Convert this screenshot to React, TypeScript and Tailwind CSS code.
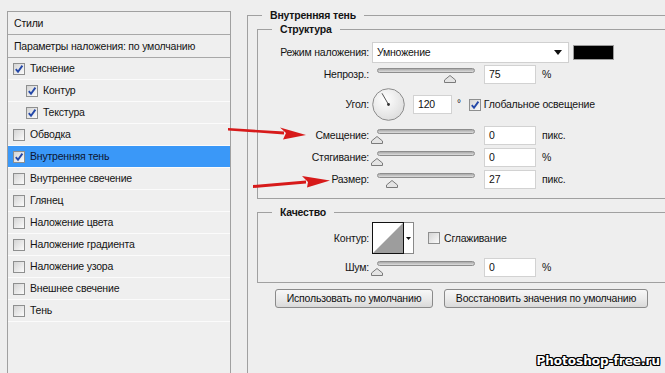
import React from 'react';

const STYLES: Array<{ label: string; checked?: boolean; sub?: boolean; selected?: boolean }> = [
  { label: 'Тиснение', checked: true },
  { label: 'Контур', checked: true, sub: true },
  { label: 'Текстура', checked: true, sub: true },
  { label: 'Обводка' },
  { label: 'Внутренняя тень', checked: true, selected: true },
  { label: 'Внутреннее свечение' },
  { label: 'Глянец' },
  { label: 'Наложение цвета' },
  { label: 'Наложение градиента' },
  { label: 'Наложение узора' },
  { label: 'Внешнее свечение' },
  { label: 'Тень' },
];

function Checkbox({ checked }: { checked?: boolean }) {
  return (
    <span className="relative w-[12px] h-[12px] shrink-0 border border-[#8e8f8f] bg-gradient-to-br from-[#d4d4d4] to-[#fbfbfb] flex items-center justify-center">
      {checked && (
        <svg width="10" height="10" viewBox="0 0 10 10">
          <path d="M1.8 5.2 L4 7.8 L8.4 1.6" fill="none" stroke="#2448a8" strokeWidth="1.9" />
        </svg>
      )}
    </span>
  );
}

// horizontal slider, thumb overlaps the bottom of the track
function Slider({ pos }: { pos: number }) {
  return (
    <div className="relative w-[98px] h-[16px] shrink-0">
      <div className="mt-[4px] h-[5px] rounded-full border border-[#8d8d8d] bg-gradient-to-b from-[#a9a9a9] to-[#dedede]" />
      <svg className="absolute top-[7px]" style={{ left: pos - 6 }} width="12" height="8" viewBox="0 0 12 8">
        <path d="M0.5 7.5 L0.5 5 L6 0.5 L11.5 5 L11.5 7.5 Z" fill="#e4e4e4" stroke="#7a7a7a" strokeWidth="1" />
      </svg>
    </div>
  );
}

function NumField({ value, w = 'w-[52px]' }: { value: string; w?: string }) {
  return (
    <div className={`${w} h-[19px] shrink-0 bg-white border border-[#d2d2d2] flex items-center pl-[4px] text-[#111]`}>
      {value}
    </div>
  );
}

function Label({ children }: { children: React.ReactNode }) {
  return <span className="w-[111px] shrink-0 text-right">{children}</span>;
}

function SliderRow({ label, value, unit, pos }: { label: string; value: string; unit: string; pos: number }) {
  return (
    <div className="flex items-center h-[22px]">
      <Label>{label}</Label>
      <div className="ml-[8px]">
        <Slider pos={pos} />
      </div>
      <div className="ml-[9px]">
        <NumField value={value} />
      </div>
      <span className="ml-[6px]">{unit}</span>
    </div>
  );
}

function Button({ children, w }: { children: React.ReactNode; w: string }) {
  return (
    <button className={`${w} h-[19px] rounded-[3px] border border-[#8a8a8a] bg-gradient-to-b from-[#f7f7f7] via-[#ebebeb] to-[#d9d9d9] leading-none text-[#111]`}>
      {children}
    </button>
  );
}

export default function App() {
  return (
    <div className="relative flex w-[665px] h-[373px] overflow-hidden bg-[#eeeeee] text-[10.5px] tracking-[-0.2px] leading-[13px] text-[#141414] font-['Liberation_Sans',Arial,sans-serif]">
      {/* ── Styles list ── */}
      <aside className="ml-[7px] mt-[11px] w-[224px] h-[380px] shrink-0 border border-[#a0a0a0] bg-[#efefef]">
        <div className="h-[23px] flex items-center pl-[6px] border-b border-[#a8a8a8]">Стили</div>
        <div className="h-[23px] flex items-center pl-[6px] border-b border-[#a8a8a8]">Параметры наложения: по умолчанию</div>
        {STYLES.map((s) => (
          <div
            key={s.label}
            className={`h-[22px] flex items-center gap-[5px] border-b border-[#fbfbfb] ${s.sub ? 'pl-[18px]' : 'pl-[5px]'} ${s.selected ? 'bg-[#3a98f8] text-[#0d1530]' : ''}`}
          >
            <Checkbox checked={s.checked} />
            <span>{s.label}</span>
          </div>
        ))}
      </aside>

      {/* ── Inner shadow settings ── */}
      <fieldset className="ml-[16px] mt-[9px] flex-1 border-l border-t border-[#a0a0a0] min-w-0">
        <legend className="ml-[14px] px-[8px] font-bold leading-[13px]">Внутренняя тень</legend>

        <fieldset className="ml-[9px] mt-[1px] border-l border-t border-b border-[#a0a0a0] pt-[5px] pb-[8px]">
          <legend className="ml-[14px] px-[8px] font-bold leading-[13px]">Структура</legend>

          <div className="flex items-center h-[22px]">
            <Label>Режим наложения:</Label>
            <div className="ml-[3px] w-[197px] h-[21px] bg-white border border-[#d0d0d0] flex items-center justify-between pl-[4px] pr-[6px]">
              <span>Умножение</span>
              <svg width="8" height="5" viewBox="0 0 8 5">
                <path d="M0 0 H8 L4 5 Z" fill="#111" />
              </svg>
            </div>
            <div className="ml-[4px] w-[41px] h-[15px] bg-black border border-[#9a9a9a]" />
          </div>

          <SliderRow label="Непрозр.:" value="75" unit="%" pos={73} />

          <div className="flex items-center h-[39px]">
            <Label>Угол:</Label>
            <svg className="ml-[3px] shrink-0" width="33" height="33" viewBox="0 0 33 33">
              <defs>
                <radialGradient id="dial" cx="40%" cy="35%" r="70%">
                  <stop offset="0%" stopColor="#ffffff" />
                  <stop offset="100%" stopColor="#dcdcdc" />
                </radialGradient>
              </defs>
              <circle cx="16.5" cy="16.5" r="15.8" fill="url(#dial)" stroke="#8c8c8c" strokeWidth="1" />
              <line x1="16.5" y1="16.5" x2="10" y2="5.3" stroke="#555" strokeWidth="1" />
              <circle cx="16.5" cy="16.5" r="1.4" fill="#333" />
            </svg>
            <div className="ml-[8px]">
              <NumField value="120" w="w-[39px]" />
            </div>
            <span className="ml-[5px] self-start mt-[12px] text-[10px]">°</span>
            <div className="ml-[8px] flex items-center gap-[3px]">
              <Checkbox checked />
              <span>Глобальное освещение</span>
            </div>
          </div>

          <SliderRow label="Смещение:" value="0" unit="пикс." pos={0} />
          <SliderRow label="Стягивание:" value="0" unit="%" pos={0} />
          <SliderRow label="Размер:" value="27" unit="пикс." pos={15} />
        </fieldset>

        <fieldset className="ml-[9px] mt-[7px] border-l border-t border-b border-[#a0a0a0] pt-[3px] pb-[4px]">
          <legend className="ml-[14px] px-[8px] font-bold leading-[13px]">Качество</legend>

          <div className="flex items-center h-[32px]">
            <Label>Контур:</Label>
            <div className="ml-[3px] flex h-[32px] shrink-0">
              <svg width="32" height="32" viewBox="0 0 32 32">
                <rect x="0" y="0" width="32" height="32" fill="#ffffff" />
                <path d="M1 31 L31 1 L31 31 Z" fill="#9d9d9d" />
                <rect x="0.5" y="0.5" width="31" height="31" fill="none" stroke="#111" strokeWidth="1" />
              </svg>
              <div className="w-[10px] h-[32px] bg-white border-t border-r border-b border-[#8a8a8a] flex items-center justify-center">
                <svg width="5" height="3" viewBox="0 0 5 3">
                  <path d="M0 0 H5 L2.5 3 Z" fill="#111" />
                </svg>
              </div>
            </div>
            <div className="ml-[14px] flex items-center gap-[4px]">
              <Checkbox />
              <span>Сглаживание</span>
            </div>
          </div>

          <div className="mt-[2px]">
            <SliderRow label="Шум:" value="0" unit="%" pos={0} />
          </div>
        </fieldset>

        <div className="mt-[6px] ml-[27px] flex gap-[11px]">
          <Button w="w-[158px]">Использовать по умолчанию</Button>
          <Button w="w-[204px]">Восстановить значения по умолчанию</Button>
        </div>
      </fieldset>

      {/* ── red pointer arrows ── */}
      <svg className="absolute inset-0 pointer-events-none" width="665" height="373" viewBox="0 0 665 373">
        <path d="M228 128 L284 131.5 L284 134.5 L228 130.5 Z" fill="#d71a1a" />
        <path d="M280 127.5 L306 135 L283 139.5 L286 133 Z" fill="#d71a1a" />
        <path d="M253 185 L306 180.5 L306 183.5 L253 188 Z" fill="#d71a1a" />
        <path d="M302 176 L330 180.5 L307 187.5 L308 182 Z" fill="#d71a1a" />
      </svg>

      {/* ── watermark ── */}
      <span className="absolute right-[5px] bottom-[5px] font-bold text-[12px] leading-[14px] tracking-normal text-white font-['DejaVu_Sans',sans-serif] [text-shadow:1px_0_0_#000,-1px_0_0_#000,0_1px_0_#000,0_-1px_0_#000,1px_1px_0_#000,-1px_-1px_0_#000,1px_-1px_0_#000,-1px_1px_0_#000]">
        Photoshop-free.ru
      </span>
    </div>
  );
}
